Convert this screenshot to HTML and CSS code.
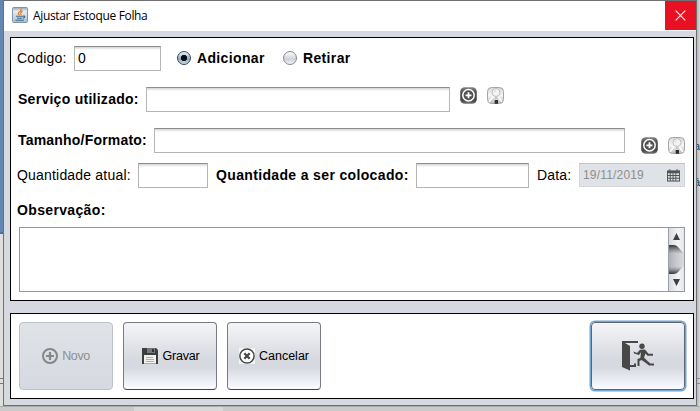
FILE: index.html
```html
<!DOCTYPE html>
<html lang="pt-BR">
<head>
<meta charset="utf-8">
<title>Ajustar Estoque Folha</title>
<link rel="stylesheet" href="styles.css">
</head>
<body>
<svg class="defs" width="0" height="0">
  <defs>
    <linearGradient id="dark" x1="0" y1="0" x2="0" y2="1"><stop offset="0" stop-color="#858585"/><stop offset=".3" stop-color="#505153"/><stop offset=".8" stop-color="#47484a"/><stop offset="1" stop-color="#777"/></linearGradient>
    <linearGradient id="silver" x1="0" y1="0" x2="0" y2="1"><stop offset="0" stop-color="#d8d8d8"/><stop offset=".5" stop-color="#f6f6f7"/><stop offset="1" stop-color="#b9babc"/></linearGradient>
    <linearGradient id="thumb" x1="0" y1="0" x2="1" y2="0"><stop offset="0" stop-color="#b0b1b5"/><stop offset=".5" stop-color="#c8c9cf"/><stop offset="1" stop-color="#d8dbe2"/></linearGradient>
    <linearGradient id="shade" x1="0" y1="0" x2="0" y2="1"><stop offset="0" stop-color="#333"/><stop offset=".3" stop-color="#666" stop-opacity="0"/><stop offset=".75" stop-color="#666" stop-opacity="0"/><stop offset="1" stop-color="#333"/></linearGradient>
    <symbol id="add" viewBox="0 0 17 17"><rect x=".2" y=".2" width="16.6" height="16.6" rx="4.5" fill="url(#dark)"/><circle cx="8.5" cy="8.3" r="5.7" fill="#4e5053" stroke="#fff" stroke-width="1.5"/><path d="M8.5 5.300v6M5.500 8.300h6" stroke="#fff" stroke-width="1.800"/></symbol>
    <symbol id="find" viewBox="0 0 17 17"><rect x=".5" y=".5" width="16" height="16" rx="4" fill="url(#silver)" stroke="#a5a6a8"/><path d="M2 15L6.500 9M15 15l-4.500-6" stroke="#fff" stroke-width="1.500"/><circle cx="9" cy="5.500" r="4" fill="#f4f4f3" stroke="#bebebd"/><path d="M7 5.500q.3-2 2-2" fill="none" stroke="#d5d5d2"/><path d="M7.700 13h3.300v3.800H7.700z" fill="#303133"/><path d="M8 10.300h2.700V12H8z" fill="#c2c2c2"/></symbol>
  </defs>
</svg>
<div class="desktop">
  <div class="code">(3,1) campos, obrigatorios(14,1)</div>
  <div class="editor"></div>
  <div class="ruler"></div>
  <div class="shadow"></div>
  <div class="fields"><span>a</span><span>á</span></div>
  <div class="status"></div>
  <main class="dialog">
    <header class="titlebar">
      <svg class="java" width="16" height="16" viewBox="0 0 16 16"><defs><linearGradient id="cup" x1="0" y1="0" x2="0" y2="1"><stop offset="0" stop-color="#8fa9bd"/><stop offset=".25" stop-color="#e6edf1"/><stop offset="1" stop-color="#a9bdca"/></linearGradient></defs><rect x=".5" y=".5" width="15" height="15" rx="1" fill="url(#cup)" stroke="#8096a8"/><path d="M8.800 1.500Q10 3.500 7.500 5T7.500 8.300M10.800 4Q7.500 5.500 9.300 8" fill="none" stroke="#f1791d" stroke-width="1.200"/><path d="M4 9.200h7M5 11.200h5M3.500 13.300h8.500M11 9.300q2.500-.7 1.500 1-.6 1-1.800 1" fill="none" stroke="#3d6c91" stroke-width="1.100"/></svg>
      <h1>Ajustar Estoque Folha</h1>
      <button class="close"><svg width="11" height="11" viewBox="0 0 11 11"><path d="M.7.700l9.600 9.600M10.300.700L.7 10.300" stroke="#fff" stroke-width="1.100"/></svg></button>
    </header>
    <section class="panel form">
      <div class="row first">
        <label class="w-code">Codigo:</label><div class="input code-in">0</div>
        <span class="radio on"></span><label class="strong w-add">Adicionar</label>
        <span class="radio"></span><label class="strong">Retirar</label>
      </div>
      <div class="row service">
        <label class="strong w-service">Serviço utilizado:</label><div class="input service-in"></div>
        <div class="tools"><svg><use href="#add"/></svg><svg><use href="#find"/></svg></div>
      </div>
      <div class="row size">
        <label class="strong w-size">Tamanho/Formato:</label><div class="input size-in"></div>
        <div class="tools low"><svg><use href="#add"/></svg><svg><use href="#find"/></svg></div>
      </div>
      <div class="row amount">
        <label class="w-now">Quantidade atual:</label><div class="input now-in"></div>
        <label class="strong w-put">Quantidade a ser colocado:</label><div class="input put-in"></div>
        <label class="w-date">Data:</label>
        <div class="date"><span>19/11/2019</span><svg width="13" height="13" viewBox="0 0 14 13"><path d="M0 1h14v12H0z" fill="#515356"/><path d="M2 0h2v1H2zM10 0h2v1h-2z" fill="#515356"/><path d="M1 4h2v2H1zM4 4h2v2H4zM7 4h2v2H7zM10 4h3v2h-3zM1 7h2v2H1zM4 7h2v2H4zM7 7h2v2H7zM10 7h3v2h-3zM1 10h2v2H1zM4 10h2v2H4zM7 10h2v2H7zM10 10h3v2h-3z" fill="#dfe2e6"/></svg></div>
      </div>
      <label class="strong notes-label">Observação:</label>
      <div class="notes">
        <svg class="scroll" width="15" height="63" viewBox="0 0 15 63"><path d="M4 12L7.500 5l3.500 7zM4 51h7L7.500 58z" fill="#3e4044"/><path d="M0 17H4C9 17 9 20 15 25V38C9 43 9 46 4 46H0z" fill="url(#thumb)"/><path d="M0 17H4C9 17 9 20 15 25V38C9 43 9 46 4 46H0z" fill="url(#shade)"/></svg>
      </div>
    </section>
    <section class="panel actions">
      <button class="btn disabled"><svg width="16" height="16" viewBox="0 0 16 16"><circle cx="8" cy="8" r="7" fill="none" stroke="#858687" stroke-width="2"/><path d="M8 4v8M4 8h8" stroke="#858687" stroke-width="2.200"/></svg><span>Novo</span></button>
      <button class="btn save"><svg width="16" height="16" viewBox="0 0 16 16"><path d="M0 0h14l2 2v14H0z" fill="#3c3f3e"/><path d="M5 0h8v5H5z" fill="#75797a"/><path d="M10 1h2v3h-2z" fill="#303332"/><path d="M2 7h12v9H2z" fill="#f0f1ee"/><path d="M4 9.500h7M4 11.500h8M4 13.500h8" stroke="#aeb0ad"/><path d="M2 15h12v1H2z" fill="#a5b883"/></svg><span>Gravar</span></button>
      <button class="btn"><svg width="16" height="16" viewBox="0 0 16 16"><path d="M0 0h16v16H0z" fill="#f6f6f6"/><circle cx="8" cy="8" r="7.100" fill="#fff" stroke="#464846" stroke-width="1.500"/><path d="M5.300 5.300l5.400 5.400M10.700 5.300l-5.400 5.400" stroke="#464846" stroke-width="2.300"/></svg><span>Cancelar</span></button>
      <button class="btn exit"><svg width="32" height="30" viewBox="0 0 32 30" fill="#484848"><path d="M0 0h16v2H3l5 3v24.500L0 26zM8 24h4v-1.500h2V26H8z"/><circle cx="20" cy="5.300" r="2.700"/><path d="M11.500 10.500l3.500 1.500 3-3.300 5-.2 3.500 4.300H31v2h-5.500l-2-2.300-1.500 4 3.500 3.500 3 2.500H32v2h-5l-3.800-3-3.700-2.600-2 1.100V25h-2v-7l2.800-1 .7-5.700-2 2.800-5-1.700z"/></svg></button>
    </section>
  </main>
</div>
</body>
</html>
```
FILE: styles.css
```css
* { box-sizing: border-box; }
body { margin: 0; font: 14px/16px "Liberation Sans", Arial, sans-serif; color: #000; }
.defs { position: absolute; }
.desktop { position: relative; width: 700px; height: 411px; overflow: hidden; background: #dfdfde; }
.code { position: absolute; left: 95px; top: -9px; color: #16167a; font: bold 13px/13px "Liberation Mono", monospace; }
.editor { position: absolute; left: 0; top: 0; width: 4px; height: 234px; background: #6486b0; border-right: 1px solid #d9e2ec; border-bottom: 2px solid #4e71a0; }
.ruler { position: absolute; left: 0; top: 378px; width: 700px; height: 6px; border: solid #77797b; border-width: 1px 0; }
.fields { position: absolute; left: 694px; top: 138px; display: flex; flex-direction: column; gap: 20px; font-size: 11px; color: #123c75; }
.shadow { position: absolute; left: 697px; top: 0; width: 3px; height: 411px; background: linear-gradient(90deg, #999a9b99, #cbcccc44); }
.status { position: absolute; left: 0; top: 406px; width: 700px; height: 5px; background: linear-gradient(90deg, #cacaca 134px, #d8d8d8 134px 223px, #cacaca 223px); border-top: 1px solid #a9aaaa; }
.dialog { position: absolute; left: 3px; top: 0; width: 694px; height: 406px; padding: 0 3px 0 6px; background: #d6d9df; border: 1px solid #707070; }
.titlebar { display: flex; height: 30px; margin: 0 -3px 0 -6px; padding-left: 8px; background: #fff; }
.java { margin-top: 6px; }
h1 { margin: 6px 0 0 5px; font: 12px/17px "Open Sans", "Noto Sans", sans-serif; letter-spacing: -.34px; }
button { margin: 0; padding: 0; border: 0; }
.close { width: 31px; height: 29px; margin-left: auto; background: #e81123; display: flex; align-items: center; justify-content: center; }
.panel { width: 684px; background: #fff; border: 1px solid #000; }
.form { height: 264px; margin-top: 6px; padding: 8px 0 0 6px; }
.row { display: flex; align-items: center; height: 25px; white-space: nowrap; }
label { letter-spacing: .19px; }
.row label { padding-bottom: 2px; }
.strong { font-weight: bold; letter-spacing: .35px; }
.input { height: 25px; flex: none; padding: 3px 3px; background: linear-gradient(#d3d3d3, #fff 3px); border: 1px solid #b5b5b5; border-top-color: #8d8d8d; }
.w-code { width: 57px; }
.code-in { width: 87px; margin-right: 16px; }
.radio { width: 14px; height: 14px; margin: 0 6px 1px 0; border: 1px solid #85878c; border-radius: 50%; background: linear-gradient(#fafafb, #cfd2d9 60%, #f2f3f8); }
.radio.on { border-color: #34475a; background: radial-gradient(circle, #080b0e 0 2.8px, transparent 3.5px), linear-gradient(#e8f0f7, #8ea9bd 60%, #c9e2f4); }
.w-add { width: 86px; }
.service { margin-top: 16px; }
.w-service { width: 129px; padding-left: 1px; letter-spacing: .27px; }
.service-in { width: 304px; margin-right: 10px; }
.tools { display: flex; gap: 10px; align-self: flex-start; }
.tools svg { width: 17px; height: 17px; }
.size { margin-top: 16px; }
.w-size { width: 137px; padding-left: 1px; letter-spacing: .2px; }
.size-in { width: 471px; margin-right: 16px; }
.low { margin-top: 9px; }
.amount { margin-top: 10px; }
.w-now { width: 121px; }
.now-in { width: 70px; margin-right: 8px; }
.w-put { width: 200px; }
.put-in { width: 113px; margin-right: 8px; }
.w-date { width: 42px; }
.date { display: flex; align-items: center; justify-content: space-between; align-self: flex-start; width: 106px; height: 24px; padding: 0 4px 0 3px; background: #dfe2e6; border: 1px solid #d2d5da; border-top-color: #c2c4c8; color: #8e8f91; font-size: 12px; letter-spacing: .18px; }
.notes-label { display: block; margin-top: 14px; }
.notes { display: flex; justify-content: flex-end; width: 666px; height: 65px; margin: 9px 0 0 2px; border: 1px solid #9297a1; }
.scroll { box-sizing: content-box; border-left: 1px solid #9b9fa7; background: linear-gradient(90deg, #d8dadd, #f3f4f6 60%, #e4e6e9); }
.actions { display: flex; gap: 10px; height: 86px; margin-top: 12px; padding: 8px; }
.btn { display: flex; align-items: center; justify-content: center; gap: 4px; width: 94px; height: 68px; border: 1px solid #777b83; border-bottom-color: #42464f; border-radius: 4px; background: linear-gradient(#f5f5f7, #d6d9df 55%, #d6d9df 68%, #f8faff 98%); font: 12.5px/16px "Liberation Sans", Arial, sans-serif; color: #000; }
.save { padding-left: 2px; }
.save span { letter-spacing: -.2px; }
.disabled { border-color: #bec2ca; background: linear-gradient(#dfe2e6, #d6d9e1); color: #8e8f91; }
.disabled span { letter-spacing: -.4px; }
.exit { margin-left: auto; border-color: #596779; box-shadow: 0 0 0 1.5px #73a4d1; }
```
